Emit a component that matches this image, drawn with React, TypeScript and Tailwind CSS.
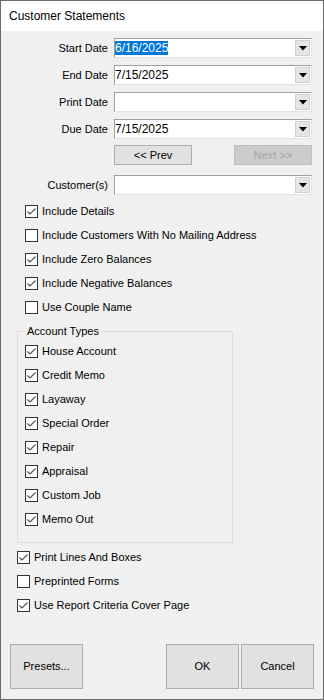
import React from "react";

const font = { fontFamily: '"Liberation Sans", Arial, sans-serif' };

const Check = ({ checked }: { checked: boolean }) => (
  <div className="w-[13px] h-[13px] border border-[#333333] bg-white flex items-center justify-center shrink-0">
    {checked && (
      <svg width="11" height="11" viewBox="0 0 11 11">
        <path d="M1.5 5.5 L4 8 L9.5 2.5" fill="none" stroke="#555555" strokeWidth="1.2" />
      </svg>
    )}
  </div>
);

const CheckRow = ({ label, checked }: { label: string; checked: boolean }) => (
  <div className="h-[24px] flex items-center gap-[4px]">
    <Check checked={checked} />
    <span className="text-[11px] leading-none">{label}</span>
  </div>
);

const Combo = ({ value, selected }: { value?: string; selected?: boolean }) => (
  <div className="w-[198px] h-[20px] bg-white border border-t-[#a0a0a0] border-l-[#a0a0a0] border-r-[#e3e3e3] border-b-[#e3e3e3] flex items-center pr-[1px]">
    <div className="flex-1 h-full flex items-center">
      {value && (
        <span
          className={`text-[12px] leading-[14px] ${
            selected ? "bg-[#0078d7] text-white" : "text-black"
          }`}
        >
          {value}
        </span>
      )}
    </div>
    <div className="w-[15px] h-[16px] bg-[#e5e5e5] border border-[#d0d0d0] flex items-center justify-center">
      <svg width="8" height="5" viewBox="0 0 8 5">
        <path d="M0 0 H8 L4 4.5 Z" fill="#000" />
      </svg>
    </div>
  </div>
);

const FieldRow = ({ label, children }: { label: string; children: React.ReactNode }) => (
  <div className="flex items-center h-[20px]">
    <div className="w-[107px] text-right text-[11px]">{label}</div>
    <div className="ml-[6px]">{children}</div>
  </div>
);

const accountTypes = [
  "House Account",
  "Credit Memo",
  "Layaway",
  "Special Order",
  "Repair",
  "Appraisal",
  "Custom Job",
  "Memo Out",
];

export default function App() {
  return (
    <div
      className="w-[324px] h-[700px] border border-[#6a6a6a] bg-[#f0f0f0] flex flex-col text-black"
      style={font}
    >
      {/* TITLE */}
      <div className="h-[30px] bg-white flex items-center pl-[8px] text-[12px]">Customer Statements</div>

      {/* DATES */}
      <div className="flex flex-col gap-[7px] mt-[7px]">
        <FieldRow label="Start Date">
          <Combo value="6/16/2025" selected />
        </FieldRow>
        <FieldRow label="End Date">
          <Combo value="7/15/2025" />
        </FieldRow>
        <FieldRow label="Print Date">
          <Combo />
        </FieldRow>
        <FieldRow label="Due Date">
          <Combo value="7/15/2025" />
        </FieldRow>
      </div>

      <div className="flex justify-between ml-[113px] w-[198px] mt-[6px]">
        <button className="w-[78px] h-[20px] bg-[#e1e1e1] border border-[#adadad] text-[11px]">&lt;&lt; Prev</button>
        <button className="w-[78px] h-[20px] bg-[#cccccc] border border-[#bfbfbf] text-[11px] text-[#a3a3a3]">Next &gt;&gt;</button>
      </div>

      <div className="mt-[10px]">
        <FieldRow label="Customer(s)">
          <Combo />
        </FieldRow>
      </div>

      {/* OPTIONS */}
      <div className="mt-[4px] pl-[24px] flex flex-col">
        <CheckRow label="Include Details" checked />
        <CheckRow label="Include Customers With No Mailing Address" checked={false} />
        <CheckRow label="Include Zero Balances" checked />
        <CheckRow label="Include Negative Balances" checked />
        <CheckRow label="Use Couple Name" checked={false} />
      </div>

      {/* ACCOUNT TYPES */}
      <fieldset className="ml-[16px] mt-[5px] w-[216px] h-[219px] border border-[#dcdcdc] px-[7px]">
        <legend className="text-[11px] px-[1px] ml-[1px] leading-[14px]">Account Types</legend>
        <div className="flex flex-col mt-[1px]">
          {accountTypes.map((t) => (
            <CheckRow key={t} label={t} checked />
          ))}
        </div>
      </fieldset>

      <div className="mt-[2px] pl-[16px] flex flex-col">
        <CheckRow label="Print Lines And Boxes" checked />
        <CheckRow label="Preprinted Forms" checked={false} />
        <CheckRow label="Use Report Criteria Cover Page" checked />
      </div>

      {/* BUTTONS */}
      <div className="mt-[27px] flex px-[9px]">
        <button className="w-[73px] h-[45px] bg-[#e1e1e1] border border-[#adadad] text-[11px]">Presets...</button>
        <div className="flex-1" />
        <button className="w-[73px] h-[45px] bg-[#e1e1e1] border border-[#adadad] text-[11px]">OK</button>
        <button className="w-[73px] h-[45px] bg-[#e1e1e1] border border-[#adadad] text-[11px] ml-[2px]">Cancel</button>
      </div>
    </div>
  );
}
